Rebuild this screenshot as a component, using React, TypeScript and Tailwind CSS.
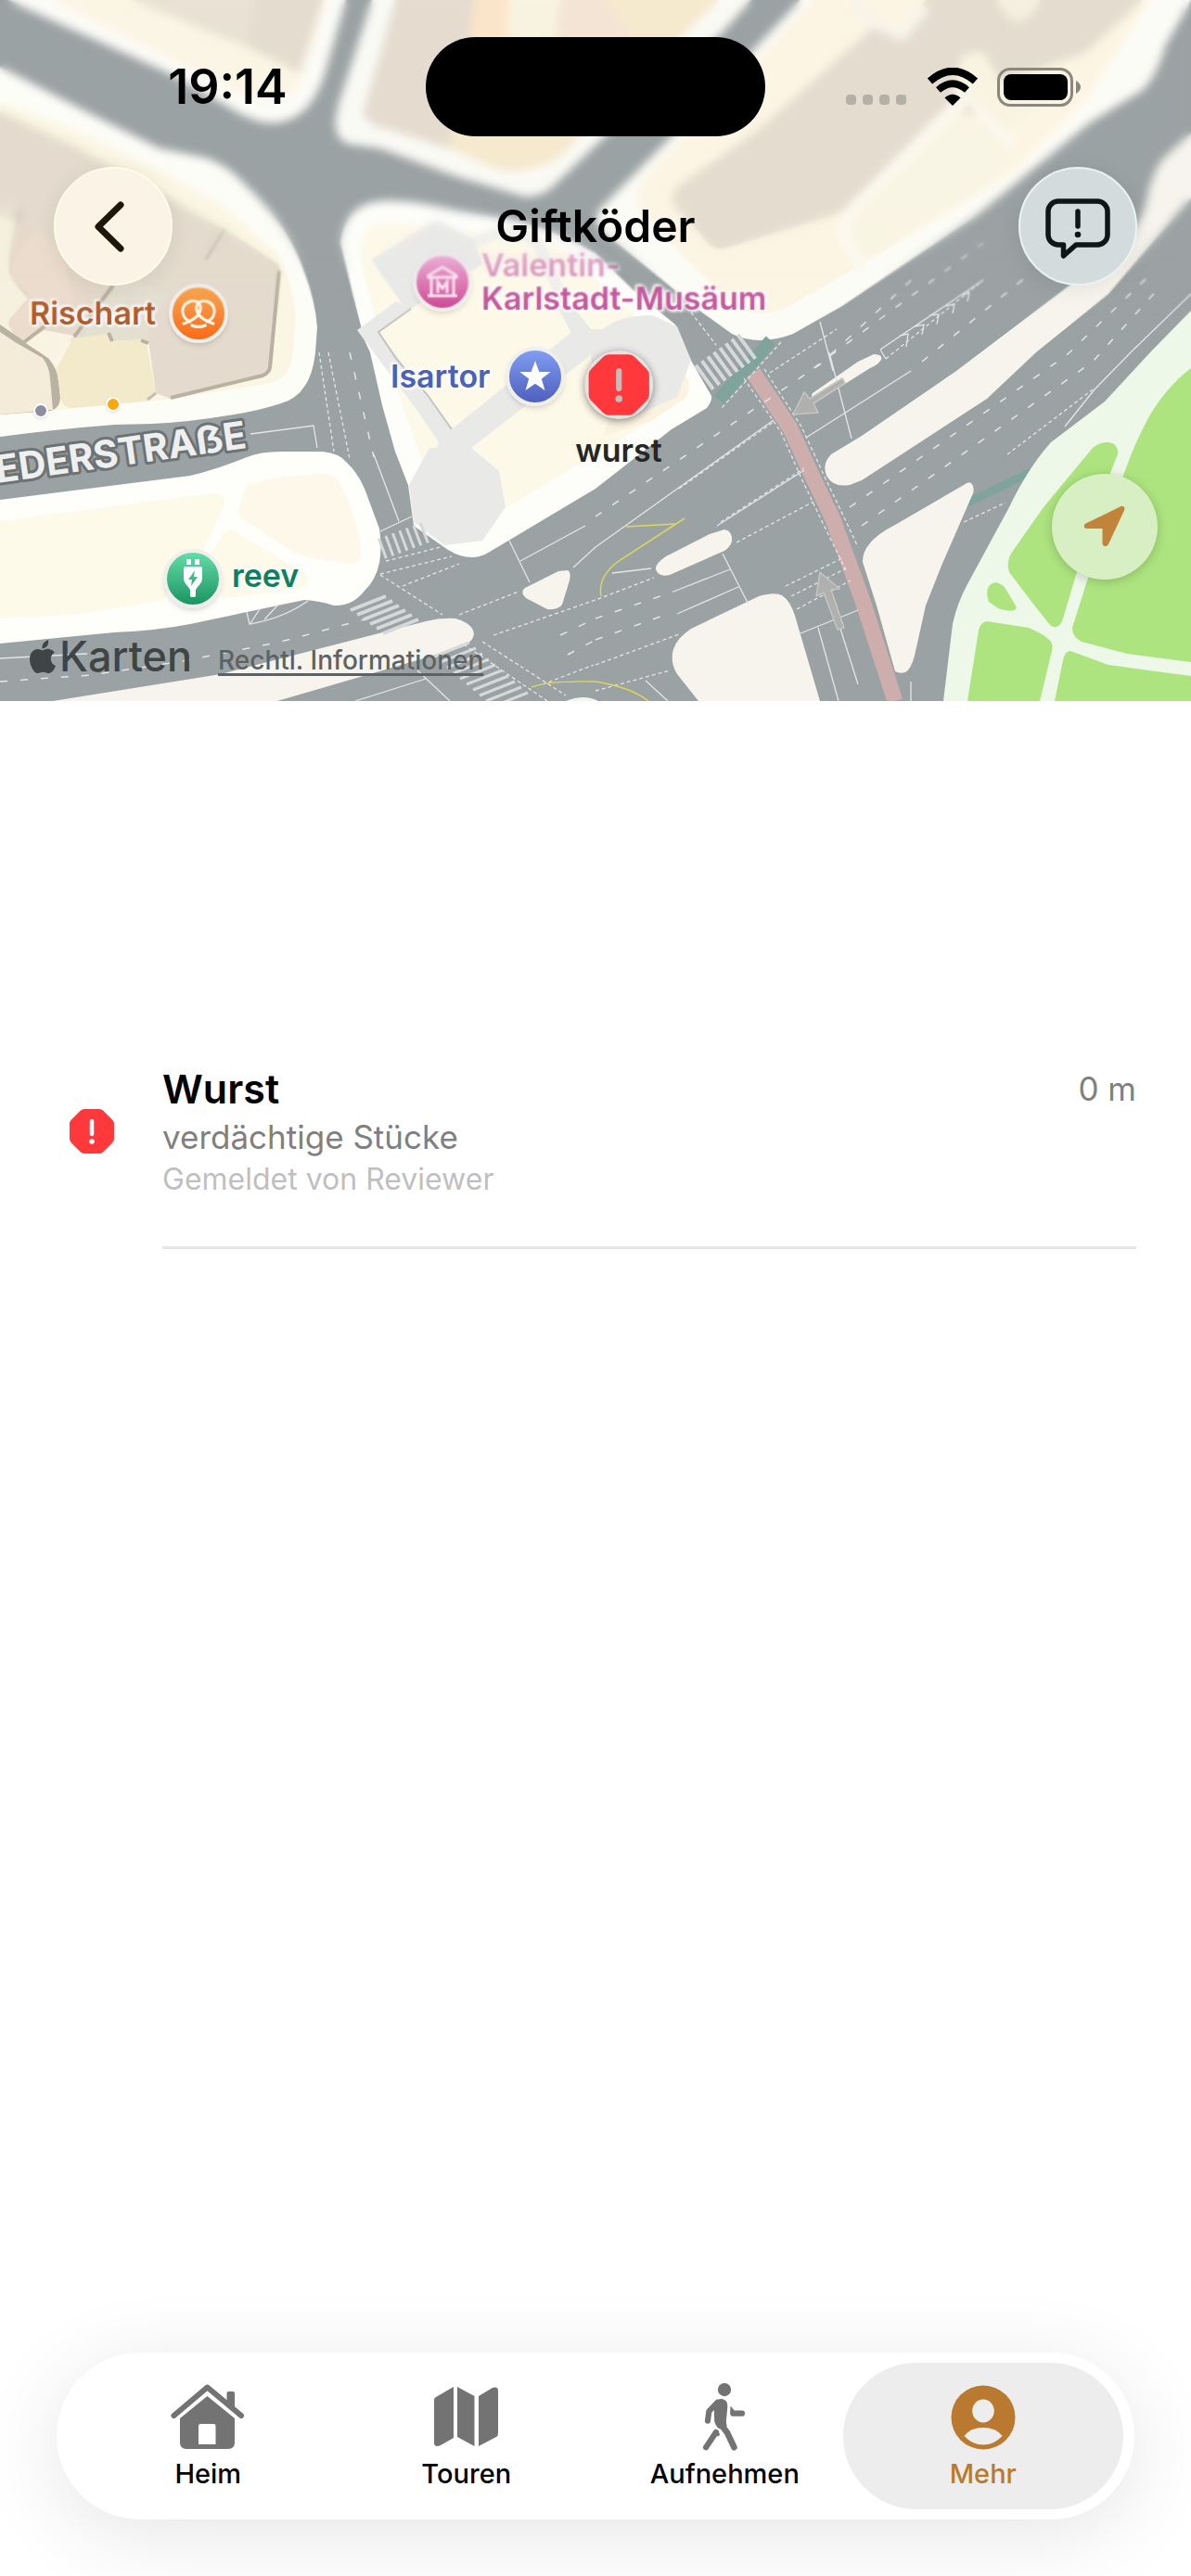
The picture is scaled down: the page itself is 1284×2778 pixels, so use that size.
import React from "react";

interface TabItem {
  label: string;
  icon: React.ReactNode;
  active?: boolean;
}

interface Report {
  title: string;
  description: string;
  author: string;
  distance: string;
}

const reports: Report[] = [
  {
    title: "Wurst",
    description: "verdächtige Stücke",
    author: "Gemeldet von Reviewer",
    distance: "0 m",
  },
];

/* ---------- Icons ---------- */

const HazardIcon = ({ className, mark }: { className: string; mark: string }) => (
  <svg viewBox="0 0 50 50" className={className} aria-hidden="true">
    <path
      d="M17 2.500H33Q35 2.500 36.500 4L46 13.500Q47.500 15 47.500 17V33Q47.500 35 46 36.500L36.500 46Q35 47.500 33 47.500H17Q15 47.500 13.500 46L4 36.500Q2.500 35 2.500 33V17Q2.500 15 4 13.500L13.500 4Q15 2.500 17 2.500Z"
      fill="#ff383c"
      stroke="#ff383c"
      strokeWidth="3"
    />
    <path d="M25 14V28" stroke={mark} strokeWidth="4.500" strokeLinecap="round" />
    <circle cx="25" cy="36" r="2.800" fill={mark} />
  </svg>
);

const HomeIcon = () => (
  <svg viewBox="0 0 80 76" className="h-[76px] w-20" aria-hidden="true">
    <path d="M3.500 37 39.500 6.500 76 37" fill="none" stroke="#737373" strokeWidth="6" strokeLinecap="round" strokeLinejoin="round" />
    <path d="M60.500 26V13Q60.500 11 62.500 11H67Q69 11 69 13V33Z" fill="#737373" />
    <path
      fillRule="evenodd"
      d="M39.500 16 69 40V66Q69 73 62 73H17Q10 73 10 66V40ZM32 46Q30 46 30 48V68H48.500V48Q48.500 46 46.500 46Z"
      fill="#737373"
    />
  </svg>
);

const ToursIcon = () => (
  <svg viewBox="0 0 70 76" className="h-[76px] w-[70px]" aria-hidden="true">
    <g fill="#737373" transform="translate(0 6)">
      <path d="M21 0V55L7 63Q0 66 0 60V14Q0 12 2 11Z" />
      <path d="M25 0 43.500 10V64L25 54Z" />
      <path d="M48 10 63 1Q69 -1 69 4V50Q69 53 67 54L48 64Z" />
    </g>
  </svg>
);

const WalkIcon = () => (
  <svg viewBox="0 0 52 80" className="h-[76px] w-[50px]" aria-hidden="true">
    <g fill="none" stroke="#737373" strokeWidth="6.500" strokeLinecap="round" strokeLinejoin="round">
      <path d="M18 24 8.500 34 7 45" />
      <path d="M21 48 29 58 37 75" strokeWidth="7" />
      <path d="M16.500 58 5 75" />
      <path d="M36 36.500H46" />
    </g>
    <g fill="#737373">
      <circle cx="26" cy="9.500" r="7.500" />
      <path d="M14 25Q17 20 23 20Q30 21 29.500 29L28 45Q28 48 29 51L20 54Q14 49 14.500 42Z" />
      <path d="M33 28 37 33 34 39.500Q32 38 32.500 34Z" />
      <path d="M16 54 21 60 19 63 13 58Z" />
    </g>
  </svg>
);

const ProfileIcon = () => (
  <svg viewBox="0 0 70 76" className="h-[76px] w-[70px]" aria-hidden="true">
    <circle cx="35" cy="39" r="34.500" fill="#b97a2f" />
    <ellipse cx="35" cy="32" rx="11.800" ry="12.500" fill="#ededed" />
    <path d="M14.500 59Q21 50 35 50Q49 50 55.500 59Q47 68.500 35 68.500Q23 68.500 14.500 59Z" fill="#ededed" />
  </svg>
);

const tabs: TabItem[] = [
  { label: "Heim", icon: <HomeIcon /> },
  { label: "Touren", icon: <ToursIcon /> },
  { label: "Aufnehmen", icon: <WalkIcon /> },
  { label: "Mehr", icon: <ProfileIcon />, active: true },
];

/* ---------- Map ---------- */

const MapDrawing = () => (
  <svg viewBox="0 0 1284 756" preserveAspectRatio="xMidYMid slice" className="absolute inset-0 h-full w-full" aria-hidden="true">
    <rect width="1284" height="756" fill="#9ba2a3" />

    {/* Block between the two northern streets */}
    <path d="M8 0 180 78 246 115Q295 148 328 119Q342 105 350 80L373 0Z" fill="#fbfbf7" />
    <path d="M55 0 254 98Q300 117 322 92L352 0Z" fill="#fbf5e5" />
    <path d="M140 0 172 12 220 32 260 48 299 66 323 78 348 0Z" fill="#e9e2d4" />
    <path d="M275 0 268 50 299 66 323 78 348 0Z" fill="#e4dccf" />

    {/* Western block */}
    <path
      d="M0 72 98 123 172 160 221 170Q245 178 262 197Q285 218 303 243Q318 265 328 293Q340 325 342 353L340 380Q337 405 328 417Q320 430 303 435Q275 444 246 448Q205 455 164 457L123 458Q60 463 0 471Z"
      fill="#fdfdf8"
    />
    <path d="M0 110 82 140 175 185 240 222 298 272Q316 300 319 345L315 385Q313 410 283 415L164 433 0 448Z" fill="#fbf6e3" />
    <path d="M0 120 86 160 188 217 242 247 299 284Q303 288 302 295L293 398Q292 404 283 407L184 430 168 424 160 367 92 368 30 366 0 330Z" fill="#e4dbce" />
    <path d="M0 228 25 225Q22 262 0 275Z" fill="#d4ccc0" />
    <path d="M0 220 18 218Q18 254 0 268Z" fill="#e8e0d2" />
    <path d="M22 235 38 250 115 300 80 362 30 368 0 345V290Z" fill="#e6d9cb" />
    <path d="M18 240Q8 270 10 295Q20 312 30 322L10 345Q8 360 22 370L0 352V232Z" fill="#f5f0df" />
    <path d="M30 322 52 332 42 355 26 369Q10 362 10 345Z" fill="#ecdccc" />
    <path d="M22 235 38 250Q10 280 12 300L34 320 80 328 66 270Z" fill="#ecdccd" />
    <path d="M122 308 150 302 182 320 160 345 160 368 85 366 104 345Z" fill="#e3dfd1" />
    <path d="M0 350 26 368 52 386Q62 398 63 410L65 430Q64 440 55 443L0 447Z" fill="#b9b1a1" />
    <path d="M0 358 18 370 46 386Q53 395 54 408L57 442 0 447Z" fill="#f4ebd8" />
    <path d="M26 369 48 356 80 362 62 386 58 390Z" fill="#f8f3e2" />
    <path d="M78 365 118 360 118 368 157 366 168 424 160 432 78 440Q66 440 65 425L61 398Z" fill="#f3eacb" />
    <path d="M301 292 291 396Q290 402 283 405L184 429M117 359 121 368M122 308 80 363M152 367 160 370M48 352 26 369" fill="none" stroke="#b9b1a1" strokeWidth="4" />
    <path d="M168 424 159 431M242 247 222 280" fill="none" stroke="#c6beb0" strokeWidth="3" />

    {/* Plaza south of the street */}
    <path
      d="M0 539 205 513Q235 506 266 493Q280 487 303 487H348Q366 489 373 498Q386 510 393 527L409 570Q412 590 409 607Q405 626 393 637Q380 654 360 653Q345 648 328 647L266 660 205 673Q170 680 123 682L0 694Z"
      fill="#fefefa"
    />
    <path d="M0 562 229 532Q243 532 242 545L238 553 217 597 176 647 90 662 0 667Z" fill="#fdfaea" />
    <path d="M270 522Q300 513 348 511Q360 511 364 517Q385 555 389 593Q389 610 378 608Q345 605 319 597L262 560Q256 555 258 548L263 530Q265 523 270 522Z" fill="#fdf8ea" />
    <path d="M242 574Q250 568 258 576L311 608Q345 625 325 634L240 646 222 605Z" fill="#fdfaea" />

    {/* Central block with the gate */}
    <path
      d="M410 217Q372 220 367 262L381 320 393 367 399 380 412 437 426 487 440 523 446 567 483 593Q508 608 528 595L642 527 724 463 762 440Q768 432 767 427L740 380 728 350 683 313 642 273Q600 248 553 237L491 227Q440 214 410 217Z"
      fill="#fdfdfa"
    />
    <path d="M412 238 600 262 690 345 738 400Q748 420 738 430L700 455 545 548 470 520 456 500 417 387 388 280Q388 240 412 238Z" fill="#fdf9e9" />
    <path d="M736 400Q748 420 738 430L700 455 650 470 660 440Z" fill="#fbf3e0" />
    <g fill="#e9e9e8">
      <path d="M470 237 510 257 520 285 443 333 437 333 400 280Z" />
      <path d="M463 483H508L538 508 545 547 520 583 479 588 446 563 441 523Z" />
      <path d="M427 325 385 356 393 367 450 443 473 477 470 487H503L637 383V355H620L487 463 408 358 443 333Z" />
      <path d="M600 330H617L637 355 620 366Z" />
      <path d="M635 355H650Q668 340 703 340L730 352 745 388 730 428 687 447 640 420Z" />
    </g>
    <path d="M512 262Q550 240 580 262L612 335" fill="none" stroke="#f0efec" strokeWidth="12" />
    <path d="M443 333 408 358 428 388 460 425 487 463" fill="none" stroke="#c4c3be" strokeWidth="2" />

    {/* Northern centre block */}
    <path d="M401 0 369 100Q360 125 362 137Q364 154 380 156L410 160 491 190 565 212Q582 213 594 203L642 157 700 100 777 37 810 0Z" fill="#fafaf5" />
    <path d="M426 0 391 123Q400 138 420 140L483 160 510 40 520 0Z" fill="#e5dccf" />
    <path d="M483 160 512 33V0H775L690 85 600 172Q560 192 530 180Z" fill="#f5e9ce" />
    <path d="M512 0H552L545 40H506Z" fill="#fbe5c8" />
    <path d="M548 0H605L598 42H546Z" fill="#f8f3e0" />
    <path d="M605 0H652L680 40H600Z" fill="#f4e4d6" />

    {/* North-eastern block */}
    <path
      d="M863 0 724 147 650 222Q636 236 650 250L691 283 757 337 789 360Q818 374 855 360L908 330 1052 233 1174 133 1232 97Q1248 80 1256 50L1273 20 1284 0Z"
      fill="#fcfcf7"
    />
    <path d="M875 0 699 187Q678 206 690 230L785 325Q818 352 860 325L904 300 1092 187 1174 105 1240 0Z" fill="#fcf5e4" />
    <path d="M998 0H1232L1170 57 1076 90 1035 140 904 230 781 268Q768 270 760 258L727 222Q720 212 732 200L814 143 941 30 970 40Z" fill="#e4dccf" />
    <path d="M1075 0H1122Q1110 26 1096 24Q1082 20 1075 0Z" fill="#f5efdf" />
    <path d="M918 0 942 24 972 38 998 8" fill="none" stroke="#f7f4ea" strokeWidth="12" />
    <path d="M1030 115 1090 150Q1094 170 1070 195L950 270Q930 278 918 262L915 240Z" fill="#f9f5e4" />
    <path d="M1040 105 920 225Q904 242 914 262L930 290M1030 88 1092 155" fill="none" stroke="#fbf9ef" strokeWidth="14" />
    <path d="M1036 60 1060 55 1078 88 1115 85 1130 110 1085 142 1032 92Z" fill="#f9f4e2" />

    <path d="M1043 542 1112 509" stroke="#7fa49c" strokeWidth="9" />

    {/* Medians and traffic islands */}
    <g fill="#f6f4ed">
      <path d="M1284 143 1252 173Q1240 192 1236 217Q1230 240 1215 260L1150 310 1031 400 929 470 896 490Q886 500 891 513Q898 526 916 523L929 518 1064 430 1117 380 1195 317 1284 213Z" />
      <path d="M1047 521Q1051 525 1049 532L1015 610 998 653 986 707Q982 722 976 725 970 727 965 724L945 653 930 606Q930 595 937 587Q945 576 965 566L1039 523Q1044 519 1047 521Z" />
      <path d="M753 756 730 727Q722 714 726 700 730 688 745 678L818 643Q835 638 843 642Q852 648 857 664L884 756Z" />
      <path d="M781 571Q790 573 789 584 787 590 781 594L722 620Q710 623 707 614 706 608 718 600L765 576Z" />
      <path d="M942 382Q952 382 950 388 946 394 938 397L884 431Q872 432 876 424L925 390Z" />
      <path d="M612 615Q616 617 614 626L606 652Q602 658 590 657L567 645Q560 638 566 634L602 616Z" />
      <path d="M57 756 238 727 459 670Q475 666 491 667Q510 672 511 684Q510 692 498 698L299 756Z" />
      <path d="M610 756Q630 748 645 756Z" />
    </g>

    {/* Park */}
    <path d="M1284 335 1240 380 1191 433 1133 477Q1108 505 1088 547L1043 630Q1032 650 1027 673L1017 756H1284Z" fill="#edf8e8" />
    <g fill="#ade47f">
      <path d="M1284 397Q1260 415 1240 447Q1222 480 1211 513L1174 620 1156 677Q1156 687 1166 692L1215 705 1284 714Z" />
      <path d="M1195 477Q1206 478 1205 490L1197 510 1160 620 1145 670Q1140 680 1132 674L1113 650 1088 617Q1084 605 1092 594L1125 547 1178 483Q1186 476 1195 477Z" />
      <path d="M1074 628Q1082 630 1086 638L1096 655Q1094 662 1076 656L1066 649Q1060 630 1074 628Z" />
      <path d="M1064 670 1109 677Q1128 685 1133 692Q1136 697 1133 706L1121 756H1043L1055 680Q1057 671 1064 670Z" />
      <path d="M1154 702 1195 717 1284 729V756H1137L1146 712Q1148 702 1154 702Z" />
    </g>

    {/* Cycle crossings */}
    <path d="M831 367 775 431" stroke="#7fa49c" strokeWidth="14" />
    <path d="M812 402 852 462 875 512 898 560 929 645 965 756" fill="none" stroke="#cdaeac" strokeWidth="17" />

    {/* Zebra crossings */}
    <g stroke="#d5d9da">
      <path d="M411 592 459 574" strokeWidth="23" strokeDasharray="3 5" />
      <path d="M758 408 809 371" strokeWidth="32" strokeDasharray="4 4" />
      {[0, 1, 2, 3, 4, 5].map((i) => (
        <path key={i} d={`M${378 + i * 7} ${658 + i * 5}l38 -15`} strokeWidth="4" />
      ))}
      {[0, 1, 2, 3, 4, 5, 6, 7, 8, 9].map((i) => (
        <path key={i} d={`M${468 + i * 7} ${708 + i * 6}l38 -15`} strokeWidth="3" />
      ))}
    </g>

    {/* Lane markings */}
    <g fill="none" stroke="#e3e6e6" strokeWidth="1.300">
      <path d="M642 590 834 453M773 567 867 507M869 472 982 400M894 380 918 473M884 347 898 400M779 597 806 650M726 638 787 614M730 662 796 633" />
      <path d="M863 683 925 658M882 677 904 756M906 678 925 738M1284 317 1219 380 1180 420 1148 460M982 735V756M660 618 702 613M618 612 642 590" />
      <path d="M0 710 94 705M270 468 338 459 342 483M410 573 444 557M403 490 430 562M549 583 571 628M561 605 631 567" />
      <path d="M266 660 269 673Q305 667 332 648M270 672 280 657M285 668 300 652M383 756 459 732M450 723 485 756M696 734 720 756" />
      <path d="M949 377 955 387M949 377 1060 302M970 362 979 360 977 374M986 352 996 350 994 361M1002 340 1012 339 1010 350M1019 330 1029 328 1027 338M1036 318 1045 316 1043 325" />
    </g>
    <g fill="none" stroke="#e3e6e6" strokeWidth="1.300" strokeDasharray="4 3">
      <path d="M344 380 360 487M354 380 377 495M410 619 487 600M416 605 479 589M410 620 477 663M434 632 495 608M495 663 559 638M532 685 642 647 705 623" />
      <path d="M520 692 610 750M500 695 590 756M794 585 877 541M847 632 908 602M853 643 912 613M859 657 917 626M642 717 732 684M642 745 722 723M585 738 640 717" />
      <path d="M1039 563 1084 542M1086 490 1178 420M955 387 1060 302M745 337 772 372M842 369 778 440M830 402 902 355M732 527 834 455M777 563 867 505" />
      <path d="M824 398 864 460 888 512 911 560 925 590M802 408 842 466 864 516 887 564 912 615" />
    </g>
    <g fill="none" stroke="#e3e6e6" strokeWidth="1.500" strokeDasharray="8 14">
      <path d="M642 557 884 393 990 295M877 397 1060 262M377 380 403 493M0 735 98 728 197 713 303 692 393 668M642 667 726 638M642 690 720 662" />
      <path d="M916 547 1150 383 1236 300M929 567 1178 390 1250 310M994 390 1113 293M604 685 642 667M612 706 642 690" />
    </g>
    <g fill="none" stroke="#ddd75a" strokeWidth="1.500">
      <path d="M675 568 728 565M738 559 667 605Q644 622 648 643" />
      <path d="M573 741Q590 734 642 735 680 741 699 756" />
    </g>
    <g fill="#b0b0ae" stroke="#c4c6c5" strokeWidth="1.500" strokeLinejoin="round">
      <path d="M855 447 867 423 873 430 908 408 911 413 877 435 882 445Z" />
      <path d="M884 617 905 635 896 636 910 677 903 679 888 639 880 643Z" />
    </g>

    <text
      transform="translate(267 483) rotate(-8)"
      textAnchor="end"
      className="font-['Inter',sans-serif] text-[41px] font-bold"
      fill="#eef0f0"
      stroke="#6d7374"
      strokeWidth="6"
      strokeLinejoin="round"
      paintOrder="stroke"
    >
      EDERSTRAẞE
    </text>
  </svg>
);

interface PinProps {
  className: string;
  children: React.ReactNode;
}

const PinDisc = ({ className, children }: PinProps) => (
  <span className={`flex size-16 shrink-0 items-center justify-center rounded-full border-4 border-[#f0efec] bg-linear-to-b shadow-md ${className}`}>
    {children}
  </span>
);

const MapPins = () => (
  <div className="text-[34px] leading-9 font-semibold [text-shadow:0_0_4px_#fff,0_0_4px_#fff,2px_2px_3px_#fff,-2px_-2px_3px_#fff]">
    <div className="absolute top-[306px] left-8 flex items-center gap-3.5 text-[#b25a2b]">
      <span>Rischart</span>
      <PinDisc className="from-[#f5a54f] to-[#fb6a15]">
        <svg viewBox="0 0 40 32" className="w-10" fill="none" stroke="#fff6ea" strokeWidth="3" strokeLinecap="round" aria-hidden="true">
          <path d="M4 27Q24 20 22 8Q19 1 11 3Q2 6 3 15Q4 22 11 25M36 27Q16 20 18 8Q21 1 29 3Q38 6 37 15Q36 22 29 25" />
          <path d="M13 29Q20 32 27 29" strokeWidth="3.500" />
        </svg>
      </PinDisc>
    </div>

    <div className="absolute top-[268px] left-[445px] flex items-center gap-2.5 text-[#c4589b]">
      <PinDisc className="from-[#eaa3d2] to-[#c9348d] opacity-90">
        <svg viewBox="0 0 36 36" className="w-9" fill="none" stroke="#fbe6f4" strokeWidth="3" aria-hidden="true">
          <path d="M18 2 3 11V13H33V11ZM2 33H34M6 14V32M30 14V32M13 30V18L18 25 23 18V30" />
        </svg>
      </PinDisc>
      <span>
        <span className="block opacity-60">Valentin-</span>
        <span className="block">Karlstadt-Musäum</span>
      </span>
    </div>

    <div className="absolute top-[374px] left-[421px] flex items-center gap-4 text-[#4a63b8]">
      <span>Isartor</span>
      <PinDisc className="from-[#819df2] to-[#4f5fbd]">
        <svg viewBox="0 0 24 24" className="w-10" fill="#fff" aria-hidden="true">
          <path d="M12 2 14.600 9H22L16.100 13.500 18.300 21 12 16.600 5.700 21 7.900 13.500 2 9H9.400Z" />
        </svg>
      </PinDisc>
    </div>

    <button type="button" className="absolute top-[378px] left-[667px] flex -translate-x-1/2 flex-col items-center text-[#262626]">
      <span className="flex size-[74px] items-center justify-center rounded-full bg-[#e4e4e3] shadow-[0_2px_8px_rgba(0,0,0,0.45)]">
        <HazardIcon className="size-[68px]" mark="#c4bcbd" />
      </span>
      <span className="mt-4">wurst</span>
    </button>

    <div className="absolute top-[592px] left-44 flex items-center gap-2.5 text-[#0f7f5d]">
      <PinDisc className="from-[#62dda8] to-[#189463]">
        <svg viewBox="0 0 24 42" className="h-[42px]" fill="#fff" aria-hidden="true">
          <path d="M5 0H10V6H5ZM14 0H19V6H14Z" />
          <path fillRule="evenodd" d="M4 8H20Q22 8 22 10V21Q22 25 17 30L15 33V39Q15 41 12 41T9 39V33L7 30Q2 25 2 21V10Q2 8 4 8ZM14 12 7 22H11L10 29 17 19H13Z" />
        </svg>
      </PinDisc>
      <span className="-mt-1.5">reev</span>
    </div>

    <span className="absolute top-[435px] left-9 size-4 rounded-full border-2 border-white bg-[#8d8e9e] shadow-sm" />
    <span className="absolute top-[428px] left-[114px] size-4 rounded-full border-2 border-white bg-[#f8aa0c] shadow-sm" />
  </div>
);

/* ---------- Header ---------- */

const StatusBar = () => (
  <div className="grid grid-cols-[1fr_366px_1fr] items-center pt-10">
    <time className="pl-8 text-center text-[52px] leading-none font-semibold">19:14</time>
    <div className="h-[107px] rounded-full bg-black" />
    <div className="flex items-center justify-center pr-8">
      <div className="mt-7 mr-[22px] flex gap-[7px]">
        {[0, 1, 2, 3].map((dot) => (
          <span key={dot} className="size-[11px] rounded-[4px] bg-[#b4b0a5]" />
        ))}
      </div>
      <svg viewBox="0 0 56 41" className="mr-5 w-14" aria-hidden="true">
        <path d="M3.500 14.500Q28 -7 52.500 14.500" fill="none" stroke="#000" strokeWidth="8" />
        <path d="M12.500 24Q28 10.500 43.500 24" fill="none" stroke="#000" strokeWidth="7.500" />
        <path d="M19.500 32.500Q28 25 36.500 32.500L28 41Z" />
      </svg>
      <svg viewBox="0 0 91 42" className="w-[91px]" aria-hidden="true">
        <rect x="1.500" y="1.500" width="79" height="39" rx="12.500" fill="none" stroke="#8a877f" strokeWidth="3" />
        <rect x="7" y="7" width="69" height="28" rx="8" />
        <path d="M85 14Q90 17 90 21T85 28Z" fill="#8a877f" />
      </svg>
    </div>
  </div>
);

const Header = () => (
  <header className="absolute inset-x-0 top-0">
    <StatusBar />
    <div className="mt-[33px] flex items-center justify-between px-[58px]">
      <button
        type="button"
        aria-label="Zurück"
        className="flex size-32 items-center justify-center rounded-full border-2 border-[#fffbe8] bg-[#fbf3e5] shadow-[0_4px_24px_rgba(0,0,0,0.08)]"
      >
        <svg viewBox="0 0 72 72" className="size-[72px]" aria-hidden="true">
          <path d="M44 13 20 36.500 44 60" fill="none" stroke="#201607" strokeWidth="7" strokeLinecap="round" strokeLinejoin="round" />
        </svg>
      </button>
      <h1 className="text-[48px] leading-none font-semibold">Giftköder</h1>
      <button
        type="button"
        aria-label="Giftköder melden"
        className="flex size-32 items-center justify-center rounded-full border-2 border-[#e9f3f4] bg-[#d4dbdd] shadow-[0_4px_24px_rgba(0,0,0,0.08)]"
      >
        <svg viewBox="0 0 72 72" className="size-[72px]" fill="none" stroke="#0e1618" strokeLinecap="round" strokeLinejoin="round" aria-hidden="true">
          <path d="M15 9H57A11 11 0 0 1 68 20V45A11 11 0 0 1 57 56H34L20.500 68V56H15A11 11 0 0 1 4 45V20A11 11 0 0 1 15 9Z" strokeWidth="5.500" />
          <path d="M36 20V36" strokeWidth="5.500" />
          <circle cx="36" cy="45" r="3.300" fill="#0e1618" stroke="none" />
        </svg>
      </button>
    </div>
  </header>
);

const MapSection = () => (
  <section aria-label="Karte" className="relative h-[756px] overflow-hidden">
    <MapDrawing />
    <MapPins />

    {/* Progressive blur under the header */}
    <div className="absolute inset-x-0 top-0 h-[350px] backdrop-blur-[1px] [mask-image:linear-gradient(#000_85%,transparent)]" />
    <div className="absolute inset-x-0 top-0 h-[300px] backdrop-blur-[5px] [mask-image:linear-gradient(#000_75%,transparent)]" />

    <div className="absolute bottom-[26px] left-8 flex items-center text-[#3f4445]">
      <svg viewBox="0 0 28 36" className="w-7" fill="currentColor" aria-hidden="true">
        <path d="M20 0Q21 5 18 7.500Q16 9.500 13.500 9.500Q13 5.500 15.500 3Q17.500 0.800 20 0Z" />
        <path d="M14 11.500Q17 9.500 20.500 9.800Q24.500 10.200 27 13.500Q22.500 16.500 22.800 21Q23 26 28 28Q25 36 20.500 36Q18.500 36 17 35.200T11.500 35.200Q10 36 8.500 36Q5.500 36 2.500 30.500Q0 26 0 21Q0 15 3.500 12Q6 9.800 9 10Q11 10.200 14 11.500Z" />
      </svg>
      <span className="ml-1 text-[45px] leading-none font-medium">Karten</span>
      <a href="#legal" className="mt-2 ml-7 text-[28px] leading-none font-medium text-[#5d6364] underline decoration-3 underline-offset-4">
        Rechtl. Informationen
      </a>
    </div>

    <button
      type="button"
      aria-label="Standort"
      className="absolute right-9 bottom-[131px] flex size-[114px] items-center justify-center rounded-full bg-[#d7efc3] shadow-[0_2px_12px_rgba(0,0,0,0.2)]"
    >
      <svg viewBox="0 0 48 48" className="size-12" aria-hidden="true">
        <path d="M42 4 4 22.500Q3 24 5 24H23.500V42Q24 44 26 42.500L43.500 5Q43.500 3.500 42 4Z" fill="#c2833a" stroke="#c2833a" strokeWidth="4" strokeLinejoin="round" />
      </svg>
    </button>

    <Header />
  </section>
);

/* ---------- List ---------- */

const ReportRow = ({ report }: { report: Report }) => (
  <li className="flex gap-9 px-[59px]">
    <div className="flex h-[148px] w-20 shrink-0 items-center justify-center">
      <HazardIcon className="size-[50px]" mark="#ffffff" />
    </div>
    <div className="flex-1 border-b-3 border-[#e6e6e6] pb-[50px]">
      <div className="flex items-center justify-between">
        <h2 className="text-[43px] leading-[56px] font-semibold">{report.title}</h2>
        <span className="text-[35px] leading-[56px] text-[#808080]">{report.distance}</span>
      </div>
      <p className="text-[35px] leading-[48px] text-[#808080]">{report.description}</p>
      <p className="text-[32px] leading-[44px] text-[#bfbfbf]">{report.author}</p>
    </div>
  </li>
);

/* ---------- Tab bar ---------- */

const TabBar = () => (
  <nav className="mx-[61px] mt-auto mb-[61px] grid h-[180px] grid-cols-4 rounded-full bg-white px-6 py-[11px] shadow-[0_16px_90px_rgba(0,0,0,0.1)]">
    {tabs.map((tab) => (
      <button
        key={tab.label}
        type="button"
        aria-current={tab.active ? "page" : undefined}
        className={
          tab.active
            ? "-mx-3 flex flex-col items-center rounded-full bg-[#ededed] pt-5 text-[#b97a2f]"
            : "flex flex-col items-center pt-5"
        }
      >
        {tab.icon}
        <span className="mt-2 text-[29px] leading-8 font-medium">{tab.label}</span>
      </button>
    ))}
  </nav>
);

const App: React.FC = () => {
  return (
    <div className="flex min-h-screen flex-col bg-white font-['Inter',sans-serif] text-black">
      <MapSection />
      <main className="pt-[390px] pb-20">
        <ul>
          {reports.map((report) => (
            <ReportRow key={report.title} report={report} />
          ))}
        </ul>
      </main>
      <TabBar />
    </div>
  );
};

export default App;
